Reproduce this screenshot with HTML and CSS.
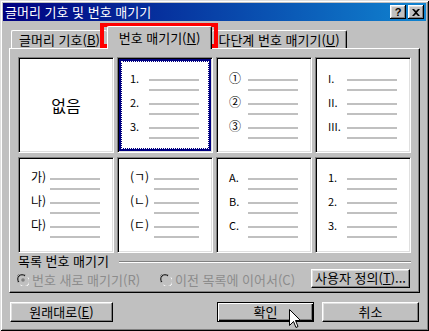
FILE: index.html
```html
<!DOCTYPE html>
<html lang="ko">
<head>
    <meta charset="utf-8">
    <title>글머리 기호 및 번호 매기기</title>
    <link rel="stylesheet" href="styles.css">
</head>
<body>
<div class="window">
    <div class="titlebar">
        <span class="title">글머리 기호 및 번호 매기기</span>
        <div class="tb-buttons">
            <span class="tb-btn help">?</span>
            <span class="tb-btn">
                <svg width="8" height="7" viewBox="0 0 8 7"><path d="M0 0h2l2 2 2-2h2L5 3.5 8 7H6L4 5 2 7H0l3-3.5z" fill="#000"/></svg>
            </span>
        </div>
    </div>

    <div class="client">
        <div class="tabs">
            <div class="tab tab-bullet">글머리 기호(<u>B</u>)</div>
            <div class="tab tab-number active">번호 매기기(<u>N</u>)</div>
            <div class="tab tab-multi">다단계 번호 매기기(<u>U</u>)</div>
        </div>

        <div class="panel">
            <div class="grid">
                <div class="tile tile-none">없음</div>

                <div class="tile sel">
                    <div class="item"><span class="num">1.</span><div class="rules"><i></i><i></i></div></div>
                    <div class="item"><span class="num">2.</span><div class="rules"><i></i><i></i></div></div>
                    <div class="item"><span class="num">3.</span><div class="rules"><i></i><i></i></div></div>
                </div>

                <div class="tile">
                    <div class="item"><span class="num circ">①</span><div class="rules"><i></i><i></i></div></div>
                    <div class="item"><span class="num circ">②</span><div class="rules"><i></i><i></i></div></div>
                    <div class="item"><span class="num circ">③</span><div class="rules"><i></i><i></i></div></div>
                </div>

                <div class="tile">
                    <div class="item"><span class="num">I.</span><div class="rules"><i></i><i></i></div></div>
                    <div class="item"><span class="num">II.</span><div class="rules"><i></i><i></i></div></div>
                    <div class="item"><span class="num">III.</span><div class="rules"><i></i><i></i></div></div>
                </div>

                <div class="tile">
                    <div class="item"><span class="num kor">가)</span><div class="rules"><i></i><i></i></div></div>
                    <div class="item"><span class="num kor">나)</span><div class="rules"><i></i><i></i></div></div>
                    <div class="item"><span class="num kor">다)</span><div class="rules"><i></i><i></i></div></div>
                </div>

                <div class="tile wide-num">
                    <div class="item"><span class="num kor">(ㄱ)</span><div class="rules"><i></i><i></i></div></div>
                    <div class="item"><span class="num kor">(ㄴ)</span><div class="rules"><i></i><i></i></div></div>
                    <div class="item"><span class="num kor">(ㄷ)</span><div class="rules"><i></i><i></i></div></div>
                </div>

                <div class="tile">
                    <div class="item"><span class="num">A.</span><div class="rules"><i></i><i></i></div></div>
                    <div class="item"><span class="num">B.</span><div class="rules"><i></i><i></i></div></div>
                    <div class="item"><span class="num">C.</span><div class="rules"><i></i><i></i></div></div>
                </div>

                <div class="tile">
                    <div class="item"><span class="num">1.</span><div class="rules"><i></i><i></i></div></div>
                    <div class="item"><span class="num">2.</span><div class="rules"><i></i><i></i></div></div>
                    <div class="item"><span class="num">3.</span><div class="rules"><i></i><i></i></div></div>
                </div>
            </div>

            <div class="group-head">
                <span>목록 번호 매기기</span>
                <div class="etch"></div>
            </div>

            <div class="group-row">
                <span class="radio radio-restart">
                    <svg width="12" height="12" viewBox="0 0 12 12">
                        <path d="M1 8.5A5 5 0 0 1 8.5 1" fill="none" stroke="#808080"/>
                        <path d="M2 8A4 4 0 0 1 8 2" fill="none" stroke="#000"/>
                        <path d="M3.5 11A5 5 0 0 0 11 3.5" fill="none" stroke="#fff"/>
                        <circle cx="6" cy="6" r="3.6" fill="#c0c0c0"/>
                        <circle cx="6" cy="6" r="1.8" fill="#808080"/>
                    </svg>
                    번호 새로 매기기(R)
                </span>
                <span class="radio">
                    <svg width="12" height="12" viewBox="0 0 12 12">
                        <path d="M1 8.5A5 5 0 0 1 8.5 1" fill="none" stroke="#808080"/>
                        <path d="M2 8A4 4 0 0 1 8 2" fill="none" stroke="#000"/>
                        <path d="M3.5 11A5 5 0 0 0 11 3.5" fill="none" stroke="#fff"/>
                        <circle cx="6" cy="6" r="3.6" fill="#c0c0c0"/>
                    </svg>
                    이전 목록에 이어서(C)
                </span>
                <span class="btn btn-custom">사용자 정의(<u>T</u>)...</span>
            </div>
        </div>

        <div class="actions">
            <span class="btn btn-reset">원래대로(<u>E</u>)</span>
            <div class="actions-right">
                <span class="btn btn-default">확인</span>
                <span class="btn">취소</span>
            </div>
        </div>
    </div>

    <div class="highlight"></div>
    <svg class="cursor" width="12" height="20" viewBox="0 0 12 20">
        <path d="M0.5 0.5V16.5L4.5 12.5L7 18.5L9 17.5L6.5 11.5H11.5Z" fill="#fff" stroke="#000"/>
    </svg>
</div>
</body>
</html>
```

FILE: styles.css
```css
* {
    box-sizing: border-box;
    font-family: "Noto Sans CJK KR", "Noto Sans", sans-serif;
}

body {
    margin: 0;
    background: #c0c0c0;
}

.window {
    position: relative;
    width: 429px;
    height: 331px;
    padding: 3px;

    background: #c0c0c0;
    box-shadow: inset 1px 1px #dfdfdf, inset -1px -1px #000, inset 2px 2px #fff, inset -2px -2px #808080;

    font-size: 13px;
    line-height: 14px;
    color: #000;
}

/* title bar */

.titlebar {
    display: flex;
    align-items: center;

    height: 18px;
    padding-left: 2px;

    background: linear-gradient(to right, #000080, #1084d0);
}

.title {
    flex: 1;
    color: #fff;
    font-size: 13px;
    line-height: 16px;
}

.tb-buttons {
    display: flex;
    gap: 2px;
    margin-right: 2px;
}

.tb-btn {
    display: flex;
    align-items: center;
    justify-content: center;

    width: 16px;
    height: 14px;

    background: #c0c0c0;
    box-shadow: inset -1px -1px #000, inset 1px 1px #fff, inset -2px -2px #808080, inset 2px 2px #dfdfdf;
}

.tb-btn.help {
    font-family: "Liberation Sans", sans-serif;
    font-weight: bold;
    font-size: 11px;
    line-height: 12px;
}

/* client area */

.client {
    padding: 5px 6px 0 6px;
}

.tabs {
    display: flex;
    align-items: flex-end;

    height: 22px;
    margin-left: 2px;
}

.tab {
    position: relative;
    height: 18px;
    padding-top: 2px;

    border-top: 1px solid #fff;
    border-left: 1px solid #fff;
    border-right: 1px solid #000;
    border-radius: 2px 2px 0 0;
    box-shadow: inset -1px 0 #808080;

    text-align: center;
    white-space: nowrap;
}

.tab-bullet {
    width: 96px;
    border-right: none;
    box-shadow: none;
}

.tab-number {
    width: 105px;
}

.tab-multi {
    width: 135px;
    border-left: none;
}

.tab.active {
    z-index: 1;
    height: 23px;
    margin-bottom: -1px;
    padding-top: 4px;

    background: #c0c0c0;
}

.panel {
    height: 245px;
    padding: 8px 8px 0 8px;

    border-top: 1px solid #fff;
    border-left: 1px solid #fff;
    border-right: 1px solid #000;
    border-bottom: 1px solid #000;
    box-shadow: inset -1px -1px #808080;
}

/* preview tiles */

.grid {
    display: grid;
    grid-template-columns: repeat(4, 96px);
    grid-template-rows: 96px 96px;
    gap: 4px 3px;
}

.tile {
    padding: 13px 0 0 12px;

    background: #fff;
    border: 1px solid;
    border-color: #808080 #fff #fff #808080;
    box-shadow: inset 1px 1px #000, inset -1px -1px #dfdfdf;
}

.tile:nth-child(n+5) {
    padding-top: 12px;
}

.tile.sel {
    box-shadow: inset 1px 1px #000, inset -1px -1px #dfdfdf, inset 0 0 0 4px #000080;
    outline: 1px dotted #fff;
    outline-offset: -5px;
}

.tile-none {
    display: flex;
    align-items: center;
    justify-content: center;

    padding: 0;

    font-size: 16px;
}

.item {
    display: flex;
    height: 24px;
}

.num {
    width: 19px;
    padding-top: 2px;

    font-size: 11px;
    line-height: 10px;
    white-space: nowrap;
}

.num.kor,
.num.circ {
    font-size: 12px;
}

.wide-num .num {
    width: 24px;
}

.rules {
    display: flex;
    flex-direction: column;
    gap: 8px;

    width: 50px;
    margin-top: 8px;
}

.wide-num .rules {
    width: 45px;
}

.rules i {
    display: block;
    height: 2px;
    background: #c0c0c0;
}

/* list numbering group */

.group-head {
    display: flex;
    align-items: center;

    height: 14px;
    margin-top: 1px;
}

.etch {
    flex: 1;
    height: 2px;
    margin: 2px 0 0 10px;

    border-top: 1px solid #808080;
    border-bottom: 1px solid #fff;
}

.group-row {
    display: flex;
    align-items: center;

    height: 20px;
}

.radio {
    display: flex;
    align-items: center;
    gap: 3px;

    margin-top: 4px;

    color: #8c8c8c;
    white-space: nowrap;
}

.radio-restart {
    width: 143px;
    margin-left: -1px;
}

/* buttons */

.btn {
    display: flex;
    align-items: center;
    justify-content: center;

    height: 20px;

    background: #c0c0c0;
    border: 1px solid;
    border-color: #fff #000 #000 #fff;
    box-shadow: inset -1px -1px #808080, inset 1px 1px #dfdfdf;

    white-space: nowrap;
}

.btn-custom {
    width: 99px;
    height: 19px;
    margin-left: auto;
    margin-right: 1px;
}

.actions {
    display: flex;
    justify-content: space-between;

    margin-top: 9px;
    padding: 0 1px;
}

.btn-reset {
    width: 103px;
}

.actions-right {
    display: flex;
    gap: 8px;
}

.actions-right .btn {
    width: 97px;
}

.btn-default {
    border-color: #000;
    box-shadow: inset 1px 1px #fff, inset -1px -1px #000, inset -2px -2px #808080;
}

/* overlays */

.highlight {
    position: absolute;
    left: 100px;
    top: 23px;
    width: 118px;
    height: 25px;

    border: 4px solid #ff0000;
}

.cursor {
    position: absolute;
    left: 289px;
    top: 309px;
}
```
